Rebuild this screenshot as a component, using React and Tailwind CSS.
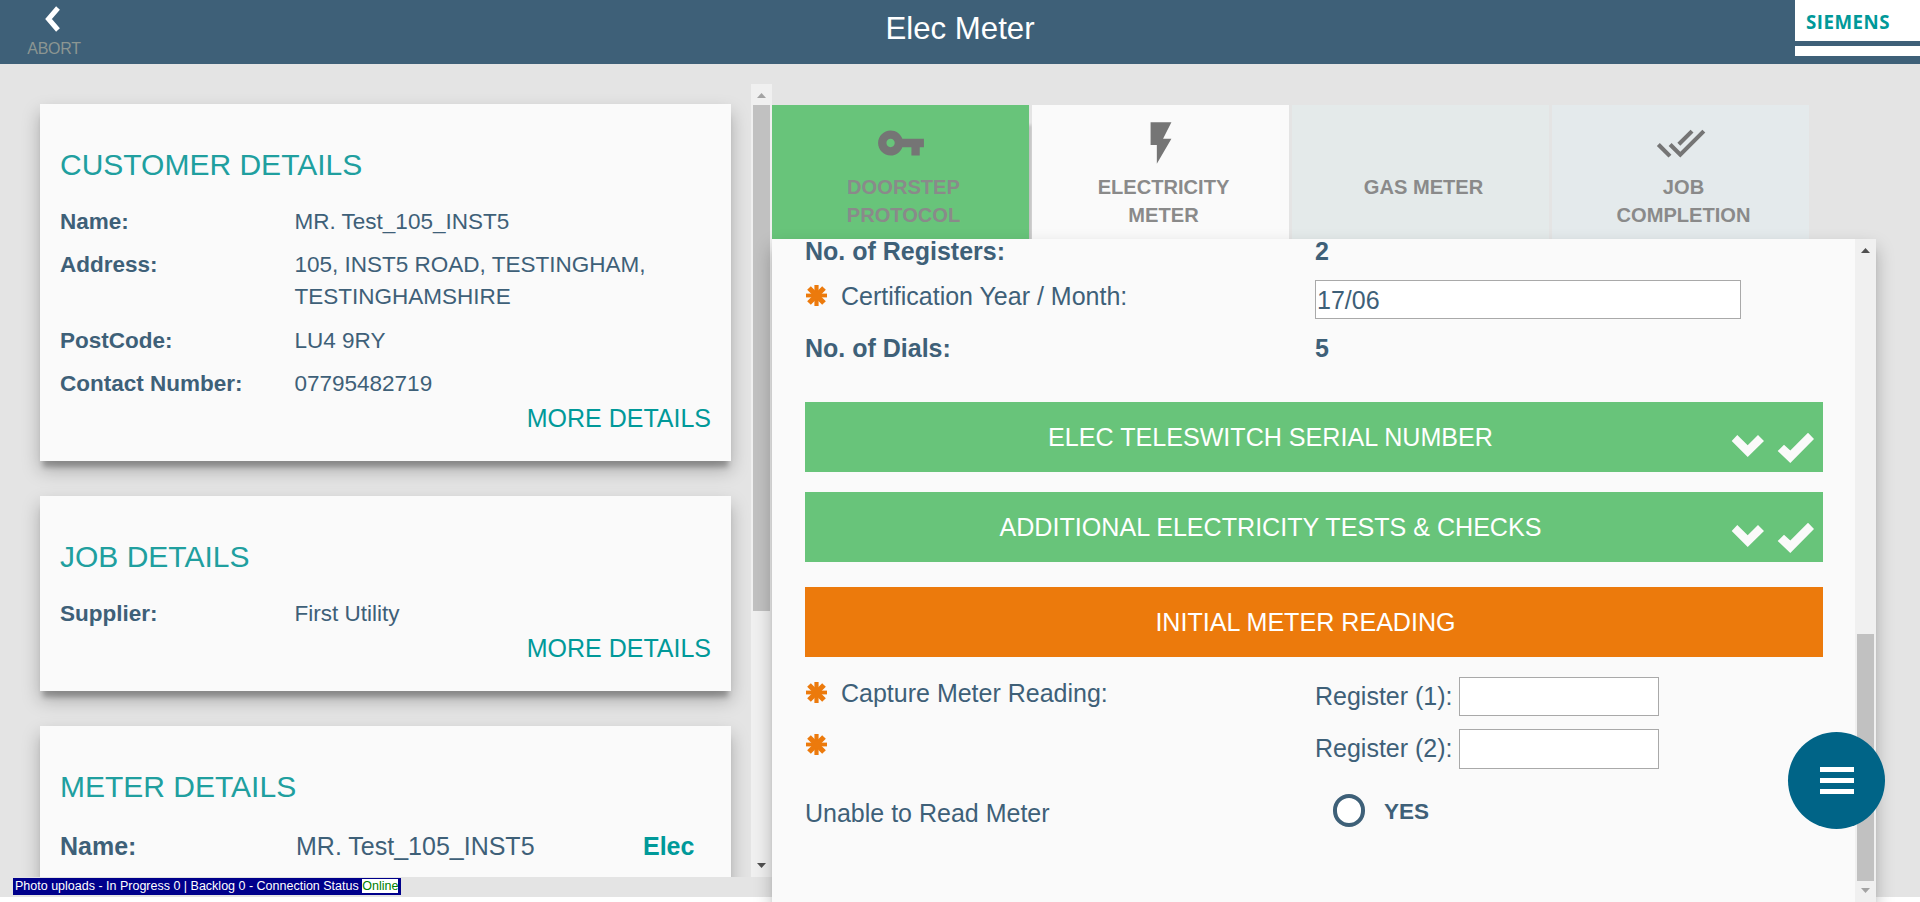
import React from "react";

const Asterisk = () => (
  <svg className="h-[21px] w-[21px] shrink-0" viewBox="0 0 21 21" stroke="#ec7a0c" strokeLinecap="butt">
    <path d="M10.5 0V21" strokeWidth="4.2" />
    <path d="M0 10.5H21" strokeWidth="3.8" />
    <path d="M3 3L18 18M18 3L3 18" strokeWidth="5.2" />
  </svg>
);

const Row = ({ label, children }) => (
  <div className="flex">
    <div className="w-[234.5px] shrink-0 font-bold">{label}</div>
    <div>{children}</div>
  </div>
);

const shadow = "shadow-[0_9px_5px_-3px_rgba(0,0,0,0.24),0_9px_17px_0_rgba(0,0,0,0.26)]";

const Card = ({ title, height, children }) => (
  <section className={`${height} ${shadow} shrink-0 bg-[#fafafa] px-5 pt-[43px]`}>
    <h2 className="text-[30px] leading-[36px] text-[#209f9f]">{title}</h2>
    {children}
  </section>
);

const More = () => (
  <div className="mt-[2px] text-right text-[25px] leading-[32px] text-[#009999]">MORE DETAILS</div>
);

const ScrollBar = ({ className, thumb, up, down }) => (
  <div className={`${className} flex w-[21px] shrink-0 flex-col items-center bg-[#f0f0f0]`}>
    <svg className="h-[21px] w-[21px] shrink-0" viewBox="0 0 21 21"><path d="M6 14L10.5 9L15 14Z" fill={up} /></svg>
    <div className="flex w-full flex-1 flex-col items-center">
      <div className={`${thumb} w-[17px] bg-[#c1c1c1]`} />
    </div>
    <svg className="h-[21px] w-[21px] shrink-0" viewBox="0 0 21 21"><path d="M6 7L10.5 12L15 7Z" fill={down} /></svg>
  </div>
);

const Tab = ({ className, icon, children }) => (
  <div className={`${className} flex h-[134px] w-[257px] flex-col items-center text-center text-[20.1px] font-bold leading-[28px] text-[#8a8a8a]`}>
    <div className="flex h-[67.5px] w-full shrink-0 justify-center pt-[13px]">{icon}</div>
    <div className="pl-[6px]">{children}</div>
  </div>
);

const Banner = ({ className, icons, children }) => (
  <div className={`${className} flex h-[70px] w-[1018px] shrink-0 text-[25.1px] leading-[70px] text-white`}>
    <div className="flex-1 text-center">{children}</div>
    {icons ? (
      <svg className="h-[70px] w-[87px] overflow-visible" viewBox="0 0 87 70" fill="#fafafa">
        <path d="M-4.300 39L1.300 33L11.700 43.300L22 33L28 39L11.700 55Z" />
        <path d="M41.700 49L48 42.700L54.300 48.500L72 30.700L78 37L54.300 61Z" />
      </svg>
    ) : (
      <div className="w-[17px]" />
    )}
  </div>
);

export default function App() {
  return (
    <div className="relative h-[902px] w-[1920px] overflow-hidden bg-white font-['Liberation_Sans',Arial,sans-serif] text-[#3e6078]">
      <div className="flex h-[897px] flex-col bg-[#e4e4e4]">
        <header className="flex h-16 shrink-0 justify-between bg-[#3e6078]">
          <div className="flex w-[125px] flex-col items-center pr-[17px]">
            <svg className="mr-[5px] mt-[6px] h-[26px] w-[20px]" viewBox="0 0 20 26" fill="none" stroke="#fff" strokeWidth="5"><path d="M16 2L6.500 13L16 24" /></svg>
            <div className="mt-[7px] text-[16px] leading-5 tracking-[-0.3px] text-[#8c9692]">ABORT</div>
          </div>
          <h1 className="text-[31.200px] leading-[58px] text-white">Elec Meter</h1>
          <div className="flex h-14 w-[125px] flex-col bg-white">
            <div className="h-[41px] pl-[11px] pt-[10px] font-['Open_Sans',sans-serif] text-[18.700px] font-bold leading-6 tracking-[0.5px] text-[#009999]">SIEMENS</div>
            <div className="h-[5px] bg-[#3e6078]" />
          </div>
        </header>

        <div className="flex flex-1 pt-5">
          <div className="flex h-[793px] w-[772px] shrink-0 overflow-hidden">
            <div className="flex h-full w-[751px] flex-col gap-[35px] overflow-hidden pl-10 pr-5 pt-5">
              <Card title="CUSTOMER DETAILS" height="h-[357px]">
                <div className="mt-[23px] flex flex-col gap-[11.300px] text-[22.500px] leading-[32px]">
                  <Row label="Name:">MR. Test_105_INST5</Row>
                  <Row label="Address:">105, INST5 ROAD, TESTINGHAM,<br />TESTINGHAMSHIRE</Row>
                  <Row label="PostCode:">LU4 9RY</Row>
                  <Row label="Contact Number:">07795482719</Row>
                </div>
                <More />
              </Card>
              <Card title="JOB DETAILS" height="h-[195px]">
                <div className="mt-[23px] text-[22.500px] leading-[32px]">
                  <Row label="Supplier:">First Utility</Row>
                </div>
                <More />
              </Card>
              <Card title="METER DETAILS" height="h-[240px]">
                <div className="mt-[23px] flex text-[25px] leading-[36px]">
                  <div className="w-[236px] font-bold">Name:</div>
                  <div className="w-[347px]">MR. Test_105_INST5</div>
                  <div className="font-bold text-[#009999]">Elec</div>
                </div>
              </Card>
            </div>
            <ScrollBar className="h-full" thumb="h-[506px]" up="#a3a3a3" down="#505050" />
          </div>

          <div className="flex w-[1104px] flex-col pt-[21px]">
            <div className="flex gap-[3px]">
              <Tab
                className="bg-[#68c47a] shadow-[3px_20px_3px_0_rgba(0,0,0,0.15)]"
                icon={<svg className="h-[50px] w-[50px]" viewBox="0 0 24 24" fill="#757575"><path d="M12.650 10C11.830 7.670 9.610 6 7 6c-3.310 0-6 2.690-6 6s2.690 6 6 6c2.610 0 4.830-1.670 5.650-4H17v4h4v-4h2v-4H12.650zM7 14c-1.100 0-2-.9-2-2s.9-2 2-2 2 .9 2 2-.9 2-2 2z" /></svg>}
              >DOORSTEP<br />PROTOCOL</Tab>
              <Tab
                className="bg-[#fafafa]"
                icon={<svg className="h-[50px] w-[50px]" viewBox="0 0 24 24" fill="#757575"><path d="M7 2v11h3v9l7-12h-4l4-8z" /></svg>}
              >ELECTRICITY<br />METER</Tab>
              <Tab className="bg-[#e4eaea]">GAS METER</Tab>
              <Tab
                className="bg-[#e4eaec]"
                icon={<svg className="h-[50px] w-[50px]" viewBox="0 0 24 24" fill="#757575"><path d="M18 7l-1.410-1.410-6.340 6.340 1.410 1.410L18 7zm4.240-1.410L11.660 16.170 7.480 12l-1.410 1.410L11.660 19l12-12-1.420-1.410zM.41 13.410L6 19l1.410-1.410L1.830 12 .41 13.410z" /></svg>}
              >JOB<br />COMPLETION</Tab>
            </div>

            <div className={`${shadow} z-10 flex h-[663px] bg-[#fafafa]`}>
              <main className="flex flex-1 flex-col pl-[33px] text-[25px] leading-[32px]">
                <div className="flex h-[41px] shrink-0 font-bold leading-[25px]">
                  <div className="w-[510px]">No. of Registers:</div>
                  <div>2</div>
                </div>
                <div className="flex h-[39px] shrink-0">
                  <div className="flex w-[510px] gap-[14px]">
                    <div className="pt-[5px] pl-[1px]"><Asterisk /></div>
                    <div>Certification Year / Month:</div>
                  </div>
                  <div className="h-[39px] w-[426px] border border-[#a9a9a9] bg-white pl-[1px] leading-[38px]">17/06</div>
                </div>
                <div className="mt-[13px] flex h-[33px] shrink-0 font-bold">
                  <div className="w-[510px]">No. of Dials:</div>
                  <div>5</div>
                </div>
                <Banner className="mt-[37px] bg-[#68c47a]" icons>ELEC TELESWITCH SERIAL NUMBER</Banner>
                <Banner className="mt-5 bg-[#68c47a]" icons>ADDITIONAL ELECTRICITY TESTS &amp; CHECKS</Banner>
                <Banner className="mt-[25px] bg-[#ec7a0c]">INITIAL METER READING</Banner>
                <div className="mt-5 flex h-[39px] shrink-0">
                  <div className="flex w-[510px] gap-[14px]">
                    <div className="pt-[5px] pl-[1px]"><Asterisk /></div>
                    <div>Capture Meter Reading:</div>
                  </div>
                  <div className="w-[144px] leading-[38px]">Register (1):</div>
                  <div className="w-[200px] border border-[#a9a9a9] bg-white" />
                </div>
                <div className="mt-[13px] flex h-[40px] shrink-0">
                  <div className="w-[510px] pt-[5px] pl-[1px]"><Asterisk /></div>
                  <div className="w-[144px] leading-[38px]">Register (2):</div>
                  <div className="w-[200px] border border-[#a9a9a9] bg-white" />
                </div>
                <div className="mt-[25px] flex shrink-0">
                  <div className="w-[528px] pt-[3px]">Unable to Read Meter</div>
                  <div className="h-[33px] w-8 rounded-full border-4 border-[#3e6078] bg-white" />
                  <div className="pl-[19px] pt-[2px] text-[22.500px] font-bold">YES</div>
                </div>
              </main>
              <div className="flex w-[21px] flex-col items-center bg-[#f0f0f0]">
                <svg className="h-[21px] w-[21px]" viewBox="0 0 21 21"><path d="M6 14L10.500 9L15 14Z" fill="#505050" /></svg>
                <div className="mt-[374px] h-[247px] w-[17px] bg-[#c1c1c1]" />
                <svg className="h-[21px] w-[21px]" viewBox="0 0 21 21"><path d="M6 7L10.500 12L15 7Z" fill="#a3a3a3" /></svg>
              </div>
            </div>
          </div>
        </div>
      </div>

      <div className="absolute left-[13px] top-[878px] flex h-[17px] w-[388px] items-center whitespace-pre bg-[#00008b] pb-px pl-[2px] text-[12.500px] leading-[14px] text-white">
        Photo uploads - In Progress 0 | Backlog 0 - Connection Status <span className="bg-white text-[#008000]">Online</span>
      </div>

      <button className="absolute left-[1788px] top-[732px] z-20 flex h-[97px] w-[97px] flex-col items-center justify-center gap-[6px] rounded-full bg-[#006487]">
        <span className="h-[5px] w-[34px] bg-white" />
        <span className="h-[5px] w-[34px] bg-white" />
        <span className="h-[5px] w-[34px] bg-white" />
      </button>
    </div>
  );
}
